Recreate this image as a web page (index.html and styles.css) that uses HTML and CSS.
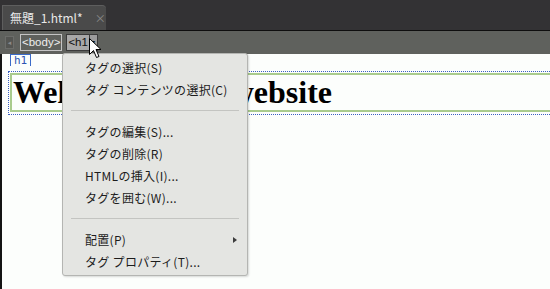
FILE: index.html
```html
<!DOCTYPE html>
<html lang="ja">
<head>
    <meta charset="UTF-8">
    <title>無題_1.html*</title>
    <link rel="stylesheet" href="styles.css">
</head>
<body>
    <div class="window">
        <div class="tabbar">
            <div class="tab">
                <span class="tab-title">無題_1.html*</span>
                <span class="tab-close">×</span>
            </div>
        </div>
        <div class="tagbar">
            <span class="tag-scroll">◂</span>
            <span class="tag">&lt;body&gt;</span>
            <span class="tag tag-active">&lt;h1<span class="tag-drop">▾</span></span>
        </div>
        <div class="content">
            <span class="el-label">h1</span>
            <div class="el-outline">
                <div class="el-box">
                    <h1>Welcome to my website</h1>
                </div>
            </div>
        </div>

        <ul class="menu">
            <li>タグの選択(S)</li>
            <li>タグ コンテンツの選択(C)</li>
            <li class="sep"></li>
            <li>タグの編集(S)...</li>
            <li>タグの削除(R)</li>
            <li>HTMLの挿入(I)...</li>
            <li>タグを囲む(W)...</li>
            <li class="sep"></li>
            <li class="has-sub">配置(P)</li>
            <li>タグ プロパティ(T)...</li>
        </ul>

        <svg class="cursor" width="13" height="21" viewBox="0 0 13 21">
            <path d="M0.5 0.5 L0.5 16.5 L4.5 12.5 L7.5 19.5 L10 18.5 L7 11.5 L12 11.5 Z" fill="#fff" stroke="#000" stroke-width="1"/>
        </svg>
    </div>
</body>
</html>
```
FILE: styles.css
```css
body {
    margin: 0;
    font-family: "Noto Sans CJK JP", "DejaVu Sans", sans-serif;
    font-size: 12px;
    background-color: #fcfefc;
}

.window {
    position: relative;
    width: 550px;
    height: 289px;
    overflow: hidden;
}

.tabbar {
    height: 30px;
    background-color: #333234;
    border-bottom: 1px solid #0e0e0e;
    display: flex;
    align-items: flex-end;
    padding-left: 2px;
}

.tab {
    width: 104px;
    height: 25px;
    box-sizing: border-box;
    background-color: #4a4a4a;
    border-top: 1px solid #5e5e5e;
    border-left: 1px solid #5e5e5e;
    border-top-right-radius: 4px;
    display: flex;
    align-items: center;
    padding-left: 7px;
    white-space: nowrap;
}

.tab-title {
    color: #e8e8e8;
    line-height: 14px;
}

.tab-close {
    color: #8c8c8c;
    font-size: 11px;
    margin-left: 12px;
}

.tagbar {
    height: 23px;
    background-color: #5f615d;
    display: flex;
    align-items: center;
    padding-left: 5px;
}

.tag-scroll {
    width: 9px;
    height: 13px;
    box-sizing: border-box;
    border: 1px solid #6c6d6a;
    background-color: #545552;
    color: #8a8a8a;
    font-size: 7px;
    line-height: 11px;
    text-align: center;
    margin-right: 6px;
}

.tag {
    height: 17px;
    box-sizing: border-box;
    border: 1px solid #c4c4c4;
    color: #eeeeee;
    padding: 0 1px;
    line-height: 15px;
    font-family: "Liberation Sans", sans-serif;
    font-size: 11.5px;
    display: flex;
}

.tag-active {
    margin-left: 4px;
    background-color: #a8a8a8;
    border-color: #3a3a3a;
    color: #111;
    padding-right: 0;
}

.tag-drop {
    margin-left: 1px;
    border-left: 1px solid #3a3a3a;
    width: 7px;
    background-color: #9c9c9c;
    font-size: 8px;
    text-align: center;
}

.content {
    border-left: 2px solid #141414;
    padding-left: 6px;
    height: 235px;
}

.el-label {
    display: inline-block;
    margin-left: 2px;
    height: 12px;
    box-sizing: border-box;
    border: 1px solid #3b6bc9;
    border-bottom: none;
    padding: 0 3px;
    color: #2c55b3;
    font-family: "DejaVu Sans Mono", monospace;
    font-size: 11px;
    line-height: 11px;
    vertical-align: top;
}

.el-outline {
    border: 1px dotted #3a5fc0;
    border-right: none;
    padding: 1px 0 2px 1px;
}

.el-box {
    border: 2px solid #a9cb8d;
    border-right: none;
}

h1 {
    margin: 0;
    padding-left: 1px;
    font-family: "Liberation Serif", serif;
    font-size: 32px;
    font-weight: bold;
    line-height: 35px;
    color: #000;
}

.menu {
    position: absolute;
    left: 62px;
    top: 53px;
    width: 186px;
    box-sizing: border-box;
    margin: 0;
    padding: 3px 0 2px;
    list-style: none;
    background-color: #e4e5e2;
    border: 1px solid #b4b5b2;
    border-radius: 3px;
    box-shadow: 1px 1px 2px rgba(0, 0, 0, 0.15);
    color: #1c1c1c;
    letter-spacing: 0.3px;
}

.menu li {
    height: 22px;
    line-height: 22px;
    padding-left: 22px;
    position: relative;
}

.menu .sep {
    height: 1px;
    padding: 0;
    margin: 9px 8px 10px;
    background-color: #c3c4c1;
}

.menu .has-sub::after {
    content: "";
    position: absolute;
    right: 10px;
    top: 8px;
    border-left: 4px solid #3c3c3c;
    border-top: 3px solid transparent;
    border-bottom: 3px solid transparent;
}

.cursor {
    position: absolute;
    left: 89px;
    top: 38px;
}
```
